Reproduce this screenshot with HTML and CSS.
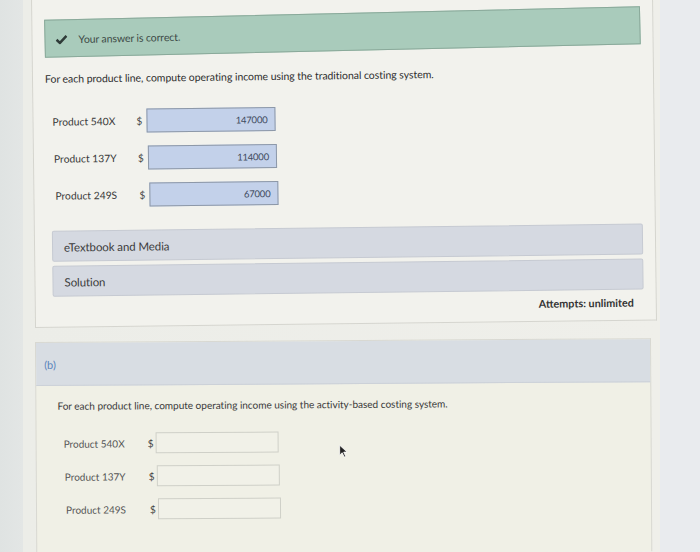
FILE: index.html
```html
<!DOCTYPE html>
<html>
<head>
<meta charset="utf-8">
<link rel="stylesheet" href="styles.css">
</head>
<body>
<div class="screen">
  <div class="main">
    <div class="topstub"></div>
    <div class="part-a">
      <div class="correct">
        <svg class="check" width="12" height="10" viewBox="0 0 12 10"><path d="M1 5.2 L4.3 8.4 L11 1.6" fill="none" stroke="#2f3b38" stroke-width="2.5"/></svg>
        <span>Your answer is correct.</span>
      </div>
      <p class="question">For each product line, compute operating income using the traditional costing system.</p>
      <div class="rows">
        <div class="row"><span class="label">Product 540X</span><span class="dollar">$</span><span class="input filled">147000</span></div>
        <div class="row"><span class="label">Product 137Y</span><span class="dollar">$</span><span class="input filled">114000</span></div>
        <div class="row"><span class="label">Product 249S</span><span class="dollar">$</span><span class="input filled">67000</span></div>
      </div>
      <div class="bars">
        <div class="bar">eTextbook and Media</div>
        <div class="bar">Solution</div>
      </div>
      <div class="attempts">Attempts: unlimited</div>
    </div>
    <div class="part-b">
      <div class="b-head"><span>(b)</span></div>
      <div class="b-body">
        <p class="question">For each product line, compute operating income using the activity-based costing system.</p>
        <div class="rows b-rows">
          <div class="row"><span class="label">Product 540X</span><span class="dollar">$</span><span class="input empty"></span></div>
          <div class="row"><span class="label">Product 137Y</span><span class="dollar">$</span><span class="input empty"></span></div>
          <div class="row"><span class="label">Product 249S</span><span class="dollar">$</span><span class="input empty"></span></div>
        </div>
        <svg class="cursor" width="9" height="14" viewBox="0 0 9 14"><path d="M1 1 L1 11 L3.5 8.6 L5.5 13 L7 12.3 L5 8 L8.4 8 Z" fill="#222" stroke="#fff" stroke-width="0.8"/></svg>
      </div>
    </div>
  </div>
  <div class="taskbar"></div>
</div>
</body>
</html>
```

FILE: styles.css
```css
* { box-sizing: border-box; }
html, body { margin: 0; padding: 0; }
body {
  width: 700px;
  height: 552px;
  overflow: hidden;
  background: #e4e7e8;
  font-family: Lato, "Open Sans", sans-serif;
  color: #3b3b3b;
}
.screen {
  width: 700px;
  height: 552px;
  display: flex;
  flex-direction: column;
  background: linear-gradient(to right, #dfe3e2 0, #e3e6e5 23px, #ecede8 23px, #efefea 660px, #e9ebee 660px);
}
.main {
  flex: 1;
  position: relative;
  padding: 0 0 0 33px;
}
.topstub {
  position: absolute;
  left: 84px;
  top: 0;
  width: 336px;
  height: 9px;
  border: 1px solid #d3d4d6;
  border-top: none;
  background: #eceef0;
  transform: rotate(-0.9deg);
  transform-origin: 0 0;
}
.part-a {
  width: 622px;
  height: 334px;
  margin-top: -6px;
  background: #f2f2ed;
  border: 1px solid #d5d5cf;
  border-top: none;
  padding: 26px 12px 0 12px;
  transform: rotate(-0.7deg);
  transform-origin: 0 50%;
}
.correct {
  height: 38px;
  background: #a9cbbb;
  border: 1px solid #8aa99a;
  display: flex;
  align-items: center;
  padding: 1px 0 0 10px;
  font-size: 10.5px;
  letter-spacing: -0.1px;
  color: #3d4a46;
  transform: rotate(-0.6deg);
  transform-origin: 0 50%;
}
.check { margin-right: 11px; }
.question {
  margin: 15px 0 0 0;
  font-size: 10.5px;
  letter-spacing: -0.05px;
  color: #2e2e2e;
  line-height: 12px;
}
.rows {
  margin-top: 25px;
  display: flex;
  flex-direction: column;
  gap: 13px;
  padding-left: 7px;
}
.row {
  display: flex;
  align-items: center;
  height: 24px;
}
.rows .row:nth-child(2) { padding-left: 1px; }
.rows .row:nth-child(3) { padding-left: 2px; }
.label {
  width: 84px;
  font-size: 10.3px;
  color: #3a3a3a;
}
.dollar {
  width: 10px;
  font-size: 10px;
  color: #444;
}
.input {
  height: 24px;
  width: 129px;
  display: flex;
  align-items: center;
  justify-content: flex-end;
  padding-right: 7px;
  font-size: 9.5px;
  letter-spacing: -0.2px;
  color: #3e4a5e;
}
.input.filled {
  background: #c3d1ea;
  border: 1px solid #8d98a8;
}
.bars {
  margin-top: 23px;
  padding-left: 5px;
  display: flex;
  flex-direction: column;
  gap: 4px;
}
.bar {
  height: 31px;
  background: #d5d9e1;
  border: 1px solid #c6cad2;
  border-radius: 2px;
  display: flex;
  align-items: center;
  padding: 2px 0 0 11px;
  font-size: 11.5px;
  letter-spacing: -0.1px;
  color: #3b3b3b;
}
.attempts {
  text-align: right;
  margin-top: 6px;
  padding-right: 10px;
  font-size: 10.8px;
  font-weight: 700;
  color: #333;
}
.part-b {
  margin: 14px 0 0 2px;
  width: 616px;
  height: 213px;
  border: 1px solid #d8d8d2;
  border-bottom: none;
  background: #f0f0e6;
  transform: rotate(-0.35deg);
  transform-origin: 0 0;
}
.b-head {
  height: 43px;
  background: #d8dde3;
  border-bottom: 1px solid #ccd1d8;
  display: flex;
  align-items: center;
  padding: 1px 0 0 8px;
  font-size: 11px;
  color: #5a84bc;
}
.b-body {
  position: relative;
  padding: 14px 0 0 21px;
}
.b-body .question { margin-top: 0; font-size: 10.1px; color: #3a3a3a; }
.b-rows {
  margin-top: 21px;
  gap: 12px;
  padding-left: 6px;
}
.b-rows .row { height: 21px; }
.b-rows .label { width: 84px; font-size: 10px; color: #555; }
.b-rows .dollar { width: 8px; }
.b-rows .input { height: 21px; width: 123px; }
.input.empty {
  background: #f1f1e8;
  border: 1px solid #cfd0c8;
}
.cursor {
  position: absolute;
  left: 302px;
  top: 60px;
}
.taskbar {
  height: 4px;
  background: linear-gradient(#a7b7c8, #7f9bbd);
}
```
